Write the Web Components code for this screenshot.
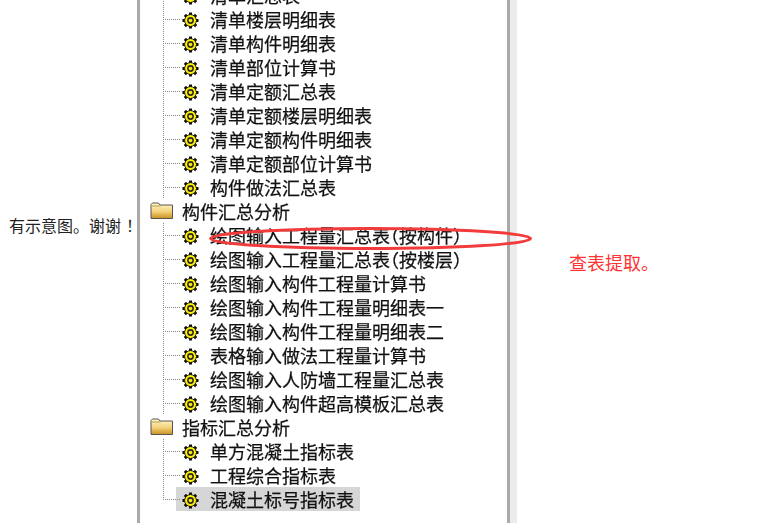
<!DOCTYPE html>
<html><head><meta charset="utf-8">
<style>
html,body{margin:0;padding:0;background:#fff;overflow:hidden;height:523px}
</style></head><body>
<post-view>
  <span slot="before">有示意图。谢谢<span style="margin-left:5px">！</span></span>
  <tree-panel slot="panel">
    <tree-item>清单汇总表</tree-item>
    <tree-item>清单楼层明细表</tree-item>
    <tree-item>清单构件明细表</tree-item>
    <tree-item>清单部位计算书</tree-item>
    <tree-item>清单定额汇总表</tree-item>
    <tree-item>清单定额楼层明细表</tree-item>
    <tree-item>清单定额构件明细表</tree-item>
    <tree-item>清单定额部位计算书</tree-item>
    <tree-item>构件做法汇总表</tree-item>
    <tree-folder>构件汇总分析</tree-folder>
    <tree-item>绘图输入工程量汇总表（按构件）</tree-item>
    <tree-item>绘图输入工程量汇总表（按楼层）</tree-item>
    <tree-item>绘图输入构件工程量计算书</tree-item>
    <tree-item>绘图输入构件工程量明细表一</tree-item>
    <tree-item>绘图输入构件工程量明细表二</tree-item>
    <tree-item>表格输入做法工程量计算书</tree-item>
    <tree-item>绘图输入人防墙工程量汇总表</tree-item>
    <tree-item>绘图输入构件超高模板汇总表</tree-item>
    <tree-folder>指标汇总分析</tree-folder>
    <tree-item>单方混凝土指标表</tree-item>
    <tree-item>工程综合指标表</tree-item>
    <tree-item selected last>混凝土标号指标表</tree-item>
  </tree-panel>
  <span slot="after">查表提取。</span>
</post-view>
<script>
class PostView extends HTMLElement{constructor(){super();this.attachShadow({mode:'open'}).innerHTML=`
<style>
:host{display:flex;height:523px;width:761px;overflow:hidden;position:relative;font-family:"Noto Sans CJK SC","Liberation Sans",sans-serif}
.before{width:137px;flex:none;box-sizing:border-box;padding:215px 0 0 9px;font-size:16px;line-height:20px;color:#222;white-space:nowrap}
.panel{flex:none;width:380px}
.after{flex:1;box-sizing:border-box;padding:250px 0 0 52px;font-size:18px;line-height:24px;color:#f33;white-space:nowrap}
svg{position:absolute;left:0;top:0;pointer-events:none}
</style>
<div class="before"><slot name="before"></slot></div>
<div class="panel"><slot name="panel"></slot></div>
<div class="after"><slot name="after"></slot></div>
<svg width="761" height="523"><ellipse cx="370.5" cy="238.5" rx="160" ry="10" fill="none" stroke="#f23c3c" stroke-width="3"/></svg>`}}
customElements.define('post-view',PostView);
class TreePanel extends HTMLElement{constructor(){super();this.attachShadow({mode:'open'}).innerHTML=`
<style>
:host{display:block;height:523px;box-sizing:border-box;border-left:3px solid #a9a9a9;background:#fff;overflow:hidden;position:relative;font-family:"Noto Sans CJK SC",sans-serif;color:#111}
.edge{position:absolute;right:0;top:0;bottom:0;width:10px;background:linear-gradient(90deg,#a9a9a9 0 3px,#ececec 3px)}
.list{margin-top:-17px;padding-left:10px}
</style>
<div class="list"><slot></slot></div><div class="edge"></div>`}}
customElements.define('tree-panel',TreePanel);
const gear=`<svg width="17" height="17" viewBox="0 0 18 18"><g stroke="#111" stroke-width="3.2"><path d="M9 .5v17M.5 9h17M3 3l12 12M15 3L3 15"/></g><circle cx="9" cy="9" r="6.2" fill="#fff200" stroke="#111" stroke-width="1"/><g stroke="#ff0" stroke-width="1.6"><path d="M9 3.5v11M3.5 9h11"/></g><circle cx="9" cy="9" r="3.6" fill="#2a2a2a"/><circle cx="9" cy="9" r="1.9" fill="#ffee00"/></svg>`;
const dotsV='repeating-linear-gradient(180deg,#888 0 1px,transparent 1px 2px)';
const dotsH='repeating-linear-gradient(90deg,#888 0 1px,transparent 1px 2px)';
class TreeItem extends HTMLElement{constructor(){super();const sel=this.hasAttribute('selected'),last=this.hasAttribute('last');this.attachShadow({mode:'open'}).innerHTML=`
<style>
:host{display:flex;align-items:center;height:24px;position:relative;padding-left:26px;white-space:nowrap;font-size:18px}
.v{position:absolute;left:13px;top:0;width:1px;height:${last?'13px':'24px'};background:${dotsV}}
.h{position:absolute;left:13px;top:12px;width:18px;height:1px;background:${dotsH}}
.r{display:flex;align-items:center;height:24px;padding:0 6px 0 6px;position:relative;${sel?'background:#d6d6d6;':''}}
.i{width:17px;height:17px;flex:none;transform:translateY(-3px);filter:blur(.2px)}
.t{margin-left:11px;line-height:24px;font-feature-settings:"halt";-webkit-text-stroke:.25px #111;filter:blur(.35px)}
</style><div class="r"><span class="i">${gear}</span><span class="t"><slot></slot></span></div><span class="v"></span><span class="h"></span>`}}
customElements.define('tree-item',TreeItem);
class TreeFolder extends HTMLElement{constructor(){super();this.attachShadow({mode:'open'}).innerHTML=`
<style>
:host{display:flex;align-items:center;height:24px;white-space:nowrap;font-size:18px}
.t{margin-left:8px;-webkit-text-stroke:.25px #111;filter:blur(.35px)}
svg{flex:none}
</style><svg width="24" height="18" viewBox="0 0 24 18"><defs><linearGradient id="f" x1="0" y1="0" x2="0" y2="1"><stop offset="0" stop-color="#fff8d0"/><stop offset=".55" stop-color="#f3d27a"/><stop offset="1" stop-color="#c9901f"/></linearGradient></defs><path d="M1 4V2.5L2.5 1h6L10 3h12.5v13.5H1z" fill="url(#f)" stroke="#555" stroke-width="1"/><path d="M1.5 4h9" stroke="#b89a50"/></svg><span class="t"><slot></slot></span>`}}
customElements.define('tree-folder',TreeFolder);
</script>
</body></html>
